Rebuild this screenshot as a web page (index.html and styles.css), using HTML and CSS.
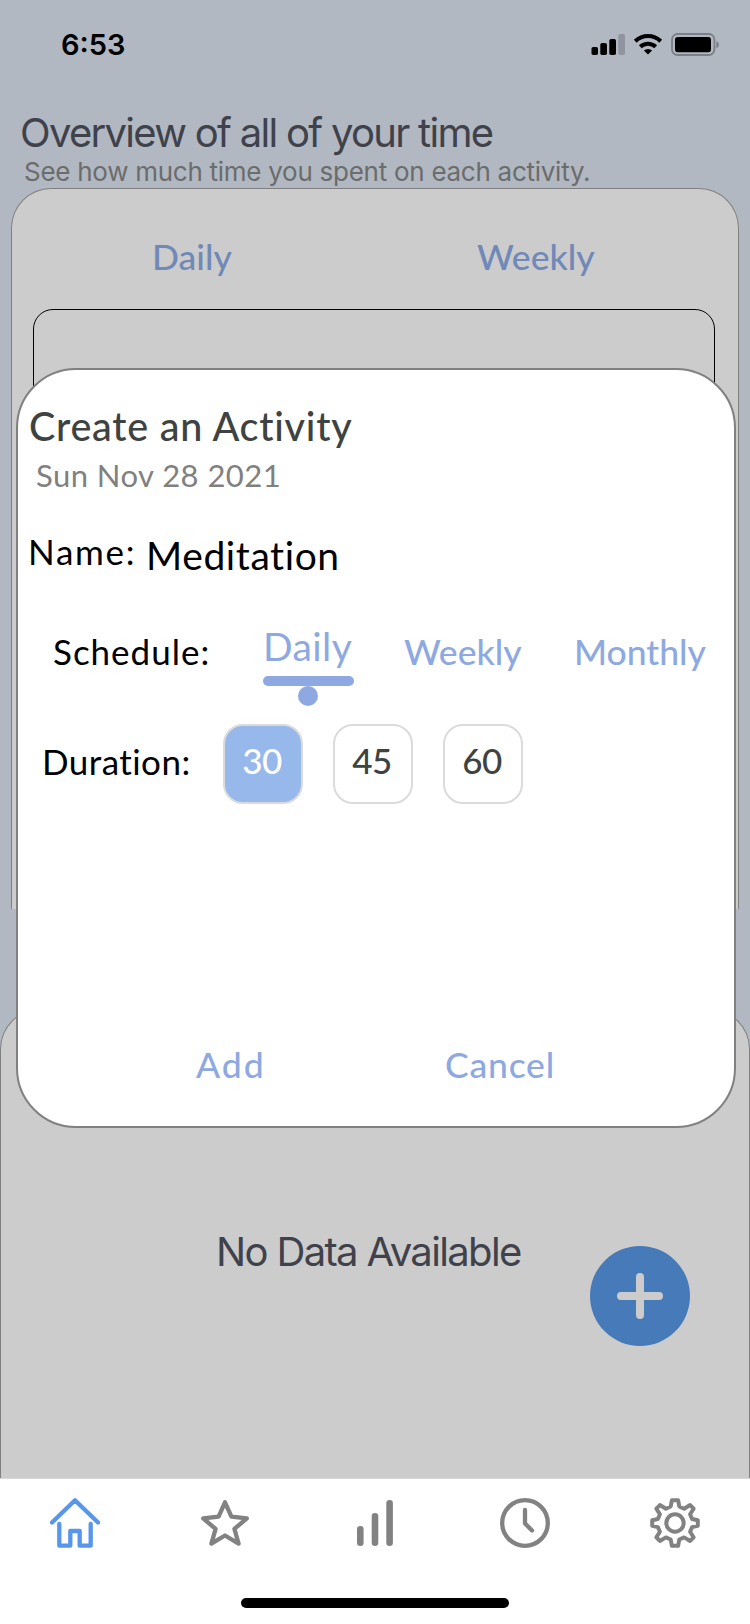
FILE: index.html
```html
<!DOCTYPE html>
<html lang="en">
<head>
<meta charset="utf-8">
<title>Activities</title>
<link rel="stylesheet" href="styles.css">
</head>
<body>
<div class="screen">
  <header class="status">
    <span class="clock">6:53</span>
    <svg class="status-icons" width="130" height="24" viewBox="0 0 130 24">
      <rect x="0.5" y="14" width="6.5" height="8" rx="1.8"/>
      <rect x="9.3" y="10" width="6.7" height="12" rx="1.8"/>
      <rect x="18.3" y="6" width="6.7" height="16" rx="1.8"/>
      <rect x="27.3" y="1" width="6.7" height="21" rx="1.8" fill="#9094a0"/>
      <g fill="none" stroke="#000" stroke-width="4">
        <path d="M44.3 8.2a18.2 18.2 0 0 1 25.4 0"/>
        <path d="M49.3 13.8a11 11 0 0 1 15.4 0"/>
      </g>
      <path d="M52.9 17.6a6 6 0 0 1 8.2 0L57 21.6z"/>
      <rect x="81" y="1" width="42.4" height="21" rx="5.5" fill="none" stroke="#7b7f87" stroke-width="1.8"/>
      <rect x="84" y="4" width="36" height="15.3" rx="2.8"/>
      <path d="M125.3 8v7.5q2.6-1 2.6-3.75t-2.6-3.75z" fill="#7b7f87"/>
    </svg>
  </header>

  <h1 class="title">Overview of all of your time</h1>
  <p class="subtitle">See how much time you spent on each activity.</p>

  <section class="overview">
    <nav class="periods"><span class="period-daily">Daily</span><span class="period-weekly">Weekly</span></nav>
    <div class="chart"></div>
  </section>

  <section class="data">
    <p class="empty">No Data Available</p>
  </section>

  <nav class="tabbar">
    <div class="tabs">
      <svg class="tab active" viewBox="0 0 50 50"><path d="M2 24.5 25 2.3l23 22.2M9.3 26v21.7h11V33h9.4v14.7h11V26"/></svg>
      <svg class="tab" viewBox="0 0 50 50"><path d="M25 4.3 31.4 18.6 46.8 20.4 34.4 30.9 38.6 45.6 25 37.5 11.4 45.6 15.6 30.9 3.2 20.4 18.6 18.6z"/></svg>
      <svg class="tab bars" viewBox="0 0 50 50"><path d="M10.3 31.2v13.6M25 18.2v26.6M39.6 5.2v39.6"/></svg>
      <svg class="tab" viewBox="0 0 50 50"><circle cx="25" cy="25" r="22.8"/><path d="M25 12v13.4l7 7"/></svg>
      <svg class="tab gear" viewBox="0 0 50 50"><circle cx="25" cy="25" r="8.7"/><path d="M21.9 2.2h6.2l1.2 6.3 4.8 2.2 6-3.7 3.5 3.7-3.5 5.6 2 4.7 5.7 1.3v5.4l-5.7 1.4-2 4.6 3.5 5.6-3.5 3.7-6-3.6-4.8 2.1-1.2 6.3h-6.2l-1.2-6.3-4.8-2.1-6 3.6-3.5-3.7 3.5-5.6-2-4.6-5.7-1.4v-5.4l5.7-1.3 2-4.7-3.5-5.6 3.5-3.7 6 3.7 4.8-2.2z"/></svg>
    </div>
    <div class="home-indicator"></div>
  </nav>

  <button class="fab" aria-label="Add activity">
    <svg width="48" height="48" viewBox="0 0 48 48"><path d="M24 5v38M5 24h38"/></svg>
  </button>

  <div class="modal">
    <h2 class="modal-title">Create an Activity</h2>
    <p class="date">Sun Nov 28 2021</p>
    <div class="row name-row">
      <label class="label name-label">Name:</label>
      <span class="name-value">Meditation</span>
    </div>
    <div class="row schedule-row">
      <span class="label schedule-label">Schedule:</span>
      <div class="choice selected">
        <span class="selected-text">Daily</span>
        <i class="underline"></i>
        <i class="dot"></i>
      </div>
      <span class="choice weekly">Weekly</span>
      <span class="choice monthly">Monthly</span>
    </div>
    <div class="row duration-row">
      <span class="label duration-label">Duration:</span>
      <div class="durations">
        <span class="duration on">30</span>
        <span class="duration">45</span>
        <span class="duration">60</span>
      </div>
    </div>
    <div class="row actions">
      <span class="action add">Add</span>
      <span class="action cancel">Cancel</span>
    </div>
  </div>
</div>
</body>
</html>
```
FILE: styles.css
```css
* { box-sizing: border-box; }
body { margin: 0; }
h1, h2, p { margin: 0; font-weight: 400; }

.screen {
  position: relative;
  display: flex;
  flex-direction: column;
  width: 750px;
  height: 1624px;
  overflow: hidden;
  background: #b1b8c1;
  font-family: Lato, "Open Sans", sans-serif;
  font-variant-ligatures: none;
  white-space: nowrap;
}

.status {
  display: flex;
  justify-content: space-between;
  height: 88px;
  padding: 0 29px 0 61px;
}
.clock {
  font: 600 29px/90px Inter, sans-serif;
  letter-spacing: 0;
}
.status-icons { margin-top: 33px; }

.title {
  margin: 21px 0 0 20px;
  font: 400 40px/48px Inter, sans-serif;
  letter-spacing: -1.7px;
  color: #3f414b;
}
.subtitle {
  margin: -1px 0 0 24px;
  font: 400 26px/32px Inter, sans-serif;
  letter-spacing: -0.27px;
  color: #6b6c6c;
}

.overview {
  height: 721px;
  margin: 0 11px;
  padding: 44px 23px 0 21px;
  border: 1px solid #808080;
  border-bottom: 0;
  border-radius: 40px 40px 0 0;
  background: #ccc;
}
.periods {
  display: flex;
  padding-left: 119px;
  font: 500 35.5px/48px Lato, sans-serif;
  color: #7089b8;
}
.period-daily { width: 325px; }
.chart {
  height: 480px;
  margin-top: 28px;
  border: 1px solid #000;
  border-radius: 20px;
}

.data {
  flex: 1;
  margin-top: 100px;
  padding: 218px 0 0 215px;
  border: 1px solid #808080;
  border-bottom: 0;
  border-radius: 40px 40px 0 0;
  background: #ccc;
}
.empty {
  font: 400 40px/48px Inter, sans-serif;
  letter-spacing: -1.65px;
  color: #3f414b;
}

.tabbar {
  display: flex;
  flex-direction: column;
  align-items: center;
  justify-content: space-between;
  height: 146px;
  padding: 19px 0 16px;
  border-top: 1px solid #d8d8d8;
  background: #fff;
}
.tabs {
  display: flex;
  justify-content: space-around;
  width: 100%;
}
.tab {
  width: 50px;
  height: 50px;
  fill: none;
  stroke: #828282;
  stroke-width: 4.3;
  stroke-linecap: round;
  stroke-linejoin: round;
}
.tab.active { stroke: #5796ea; }
.tab.bars { stroke-width: 6.6; }
.tab.gear { stroke-width: 4; }
.home-indicator {
  width: 268px;
  height: 10px;
  border-radius: 5px;
  background: #000;
}

.fab {
  position: absolute;
  left: 590px;
  top: 1246px;
  display: grid;
  place-items: center;
  width: 100px;
  height: 100px;
  padding: 0;
  border: 0;
  border-radius: 50%;
  background: #477ab9;
}
.fab svg { fill: none; stroke: #ccc; stroke-width: 8; stroke-linecap: round; }

.modal {
  position: absolute;
  left: 16px;
  top: 368px;
  width: 720px;
  height: 760px;
  padding-top: 32px;
  border: 2px solid #808080;
  border-radius: 60px;
  background: #fff;
}
.modal-title {
  margin-left: 11px;
  font-size: 39.5px;
  font-weight: 500;
  line-height: 48px;
  letter-spacing: 0.75px;
  color: #3e4341;
}
.date {
  margin: 7px 0 0 18px;
  font-size: 31px;
  line-height: 36px;
  letter-spacing: 0.45px;
  color: #808080;
}
.row { display: flex; align-items: flex-start; line-height: 48px; }
.label { font-size: 35px; color: #000; }

.name-row { margin-top: 34px; padding-left: 10px; }
.name-label { width: 118px; letter-spacing: 1.7px; }
.name-value { padding-top: 4px; font-size: 39px; letter-spacing: 0.6px; }

.schedule-row { height: 84px; margin-top: 43px; padding-left: 35px; }
.schedule-label { width: 210px; padding-top: 5px; letter-spacing: 1px; }
.choice { font-size: 35.5px; font-weight: 500; color: #8ea9e1; }
.selected {
  display: flex;
  flex-direction: column;
  width: 91px;
  font-size: 39px;
  font-weight: 400;
  letter-spacing: 0.4px;
}
.underline {
  height: 10px;
  margin-top: 6px;
  border-radius: 5px;
  background: #8ea9e1;
}
.dot {
  width: 20px;
  height: 20px;
  margin-left: 35px;
  border-radius: 50%;
  background: #8ea9e1;
}
.weekly { width: 170px; padding: 6px 0 0 50px; }
.monthly { padding: 6px 0 0 50px; }

.duration-row { margin-top: 18px; padding-left: 24px; }
.duration-label { width: 181px; padding-top: 13px; letter-spacing: 0.45px; }
.durations { display: flex; gap: 30px; }
.duration {
  width: 80px;
  height: 80px;
  padding-right: 2px;
  border: 2px solid #dbdbdb;
  border-radius: 20px;
  font-size: 35px;
  font-weight: 500;
  line-height: 69px;
  letter-spacing: -0.5px;
  text-align: center;
  color: #3e4341;
}
.duration.on { background: #96b8eb; color: #fff; }

.actions { margin-top: 237px; padding-left: 178px; }
.action { font-size: 35.5px; font-weight: 500; color: #8ea9e1; }
.add { width: 249px; letter-spacing: 2px; }
.cancel { letter-spacing: 0.8px; }
```
